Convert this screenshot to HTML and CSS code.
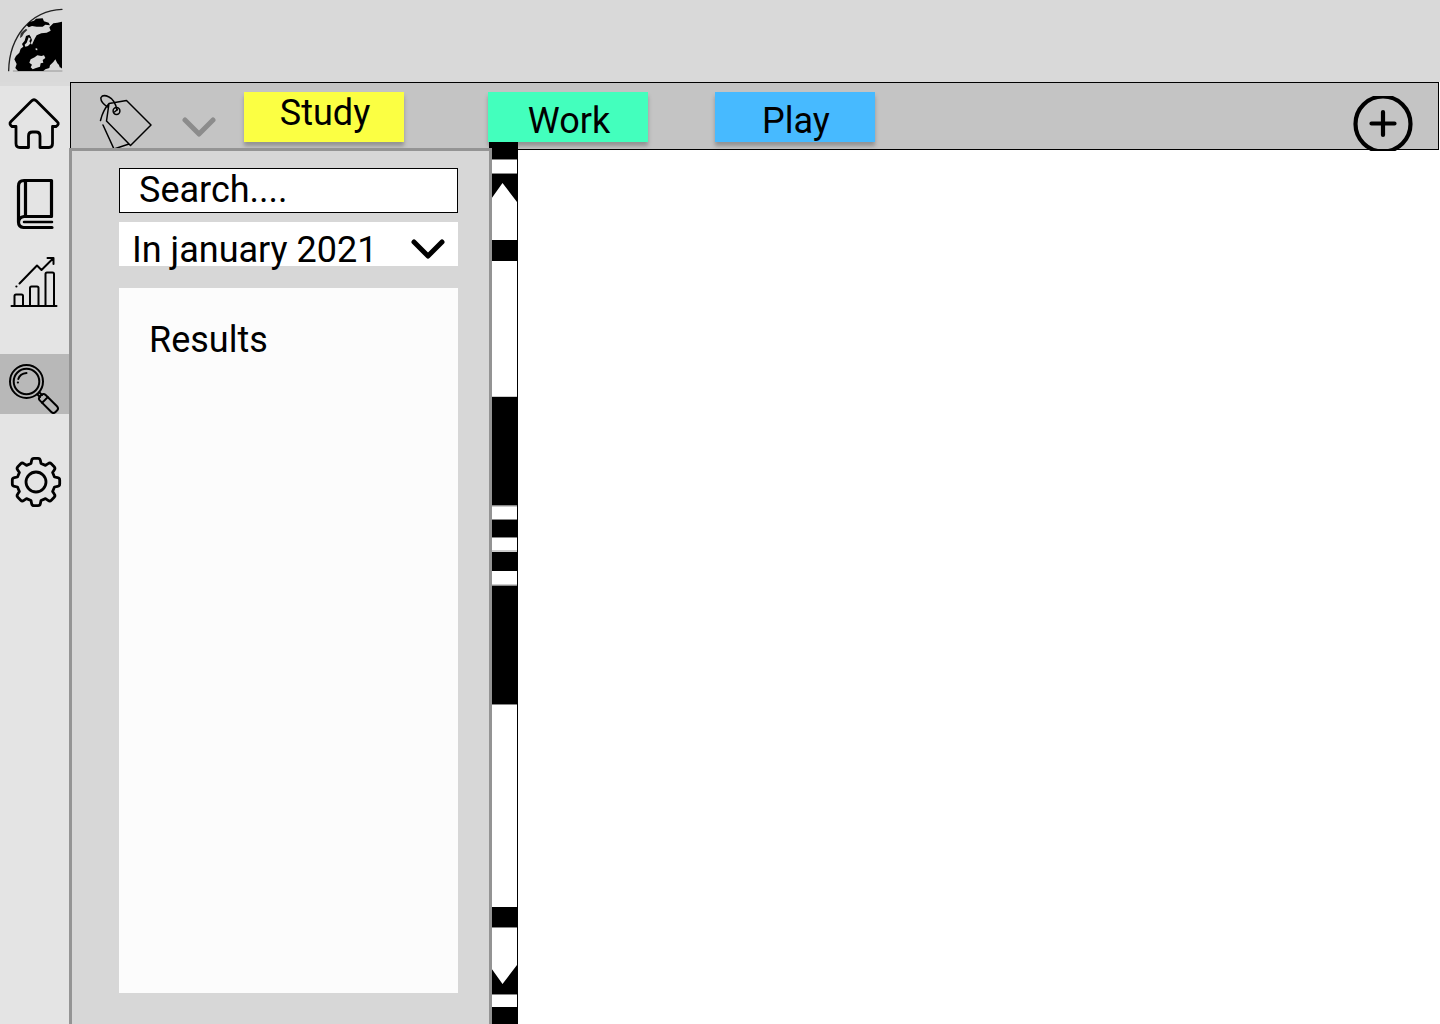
FILE: index.html
```html
<!DOCTYPE html>
<html lang="en">
<head>
<meta charset="utf-8">
<meta name="viewport" content="width=device-width, initial-scale=1">
<title>Search</title>
<link rel="stylesheet" href="styles.css">
</head>
<body>
<header class="topbar">
  <a class="logo" href="#" aria-label="Start page">
    <svg width="70" height="82" viewBox="0 0 210 246">
      <path d="M26 212C28 110 92 32 186 28" fill="none" stroke="#222" stroke-width="4"/>
      <path d="M40 213H186" stroke="#777" stroke-width="2"/>
      <path d="M80 76L88 66L102 62L108 56L128 55L132 64L146 68L150 76L136 74L128 80L110 80L96 78L86 82Z"/>
      <path d="M186 65V206L180 198L172 190L166 178L160 186L150 196L148 204L136 208L130 213H54L46 204L50 192L43 178L48 168L58 158L62 146L70 140L66 132L74 122L78 108L88 104L92 110L96 120L92 130L96 134L104 116L110 106L124 100L140 98L152 92L148 82L160 70L172 68Z"/>
      <path d="M62 100L70 92L78 86L82 90L72 100L66 110L60 114Z" fill="#333"/>
      <g fill="#d9d9d9">
        <path d="M86 112L92 116L88 124L92 130L84 138L76 140L74 134L80 128Z"/>
        <path d="M104 172L112 166L124 168L132 166L136 174L128 180L130 188L122 190L120 200L108 204L98 208L92 202L96 194L88 188L92 178Z"/>
        <path d="M107 144l5 2v5l-5-1z"/>
      </g>
      <path d="M176 190l8 4 2 10-7-2z"/>
    </svg>
  </a>
</header>
<div class="shell">
  <nav class="sidebar" aria-label="Main">
    <button class="nav-item" type="button" aria-label="Home">
      <svg viewBox="0 93 70 60"><path stroke-width="2.8" d="M31.5 100L11 120.5Q8.500 123 12 125.500H16V142.500Q16 146.500 20 146.500H28.500V135Q28.500 131 32.500 131H36Q40 131 40 135V146.500H49Q52.500 146.500 52.500 142.500V125.500H56Q60 123 57 120.500L36.500 100Q34 97.500 31.500 100Z"/></svg>
    </button>
    <button class="nav-item" type="button" aria-label="Library">
      <svg viewBox="0 174 70 60"><path stroke-width="3.2" d="M52 227.500H23.500Q18.500 227 18.500 222V186Q18.500 180.500 24 180.500H51.500V216.500H24Q19 217 18.500 222M25.500 181V216"/><path stroke-width="2.500" d="M24 222H52"/></svg>
    </button>
    <button class="nav-item" type="button" aria-label="Statistics">
      <svg viewBox="0 254 70 60"><path stroke-width="2" d="M11.500 306H56.500M14.500 306V296Q14.500 294.500 16 294.500H21.500Q23 294.500 23 296V306M30 306V288Q30 286.500 31.500 286.500H37Q38.500 286.500 38.500 288V306M45.500 306V274Q45.500 272.500 47 272.500H52.500Q54 272.500 54 274V306M19.500 283.500L37 265.500L41.500 270L53.500 258M47.500 258H53.500V264M16.300 286.500h.2"/></svg>
    </button>
    <button class="nav-item nav-item--spaced nav-item--active" type="button" aria-label="Search" aria-current="page">
      <svg viewBox="0 354 70 60"><g stroke-width="2"><circle cx="26.500" cy="381.500" r="16.500"/><circle cx="26.500" cy="381.500" r="12.800"/><path d="M18.300 379Q20 373.500 26.500 373M17.800 382.500h.2M37.500 394.500L40 397M39.500 392.500L42 395"/><g transform="rotate(45 40 395)"><rect x="41" y="391" width="22" height="8" rx="3"/><path d="M47 391V399"/></g></g></svg>
    </button>
    <button class="nav-item nav-item--spaced" type="button" aria-label="Settings">
      <svg viewBox="-36 -28 70 60"><circle r="10" stroke-width="2.800"/><path stroke-width="2.800" d="M-5-18.500L-4.400-21.500Q-4-23.700-2-23.700H2Q4-23.700 4.400-21.500L5-18.500L9.500-16.600L12.100-18.300Q13.900-19.600 15.300-18.200L18.200-15.300Q19.600-13.900 18.300-12.100L16.600-9.500L18.500-5L21.500-4.400Q23.700-4 23.700-2V2Q23.700 4 21.500 4.400L18.500 5L16.600 9.500L18.300 12.100Q19.600 13.900 18.200 15.300L15.300 18.200Q13.900 19.600 12.100 18.300L9.500 16.600L5 18.500L4.400 21.500Q4 23.700 2 23.700H-2Q-4 23.700-4.400 21.500L-5 18.500L-9.500 16.600L-12.100 18.300Q-13.900 19.600-15.300 18.200L-18.200 15.300Q-19.600 13.900-18.300 12.100L-16.600 9.500L-18.500 5L-21.500 4.400Q-23.700 4-23.700 2V-2Q-23.700-4-21.500-4.400L-18.500-5L-16.600-9.500L-18.300-12.100Q-19.600-13.900-18.200-15.300L-15.300-18.200Q-13.900-19.600-12.100-18.300L-9.500-16.600Z"/></svg>
    </button>
  </nav>
  <div class="content">
    <div class="toolbar">
      <button class="tool" type="button" aria-label="Tags">
        <svg width="54" height="57" viewBox="99 92 54 57" stroke-width="1.500"><path d="M109 103.500L126.500 100.500L151 125L130.500 145.500L106.500 121ZM109 103.500Q103 110 100.500 120.500M103 125L114 149L129 144M107.500 107Q100 102 101 97.500Q103 94 109 97Q115 100 117 110"/><circle cx="116.500" cy="111" r="3.400"/><path d="M114.500 112l3-2.500"/></svg>
      </button>
      <button class="tool tool--menu" type="button" aria-label="More tags">
        <svg width="34" height="24" viewBox="0 0 34 24"><path d="M3 4L17 18L31 4" stroke="#8c8c8c" stroke-width="5"/></svg>
      </button>
      <button class="tag tag--study" type="button">Study</button>
      <button class="tag tag--work" type="button">Work</button>
      <button class="tag tag--play" type="button">Play</button>
      <button class="tool tool--add" type="button" aria-label="Add tag">
        <svg width="60" height="55" viewBox="-30 -27 60 55"><circle cy="1" r="27.500" stroke-width="4.200"/><path d="M-11.500 .5H11.500M0-11V12" stroke-width="4.200"/></svg>
      </button>
    </div>
    <div class="workspace">
      <aside class="panel">
        <input class="search" type="text" placeholder="Search...." aria-label="Search">
        <div class="period">
          <select class="period-select" aria-label="Period"><option>In january 2021</option></select>
          <svg class="period-arrow" width="34" height="24" viewBox="0 0 34 24"><path d="M3 4L17 18L31 4" stroke-width="5"/></svg>
        </div>
        <section class="results"><h2 class="results-title">Results</h2></section>
      </aside>
      <div class="scroller" aria-hidden="true">
        <svg class="scroller-art" viewBox="489 142 29 882" preserveAspectRatio="none">
          <path fill="#000" d="M489 142H518V1024H489Z"/>
          <path fill="#fff" d="M489 159H517V173H489ZM489 202L502.500 183L517 202V240H489ZM489 261H517V397H489ZM489 506H517V519H489ZM489 538H517V551H489ZM489 571H517V585H489ZM489 705H517V907H489ZM489 928H517V965L502.500 984L489 965ZM489 994H517V1007H489Z"/>
          <path fill="#888" d="M489 159H517V160H489ZM489 173H517V174H489ZM489 505H517V506H489ZM489 519H517V520H489ZM489 537H517V538H489ZM489 585H517V586H489ZM489 704H517V705H489ZM489 927H517V928H489ZM489 994H517V995H489Z"/>
          <path fill="#ccc" d="M489 396H517V397H489ZM489 506H517V507H489ZM489 550H517V552H489ZM489 584H517V585H489Z"/>
        </svg>
      </div>
      <main class="document"></main>
    </div>
  </div>
</div>
</body>
</html>
```
FILE: styles.css
```css
* { box-sizing: border-box; }

body {
  margin: 0;
  min-height: 100vh;
  display: flex;
  flex-direction: column;
  background: #fff;
  color: #000;
  font-family: Roboto, "Liberation Sans", sans-serif;
  font-size: 36px;
  line-height: 42px;
}

button, input, select {
  margin: 0;
  padding: 0;
  border: 0;
  border-radius: 0;
  background: none;
  color: inherit;
  font: inherit;
}

svg {
  display: block;
  stroke-linecap: round;
  stroke-linejoin: round;
}

.topbar { height: 82px; background: #d9d9d9; }
.logo { display: block; width: 70px; color: inherit; }

.shell { flex: 1; display: flex; }

.sidebar {
  flex: none;
  width: 70px;
  padding-top: 8px;
  display: flex;
  flex-direction: column;
  gap: 20px;
  background: #e4e4e4;
  border-top: 4px solid #dadada;
}
.nav-item { width: 70px; height: 60px; }
.nav-item svg { width: 70px; height: 60px; fill: none; stroke: #000; }
.nav-item--spaced { margin-top: 20px; }
.nav-item--active { background: #b8b8b8; }

.content { flex: 1; min-width: 0; display: flex; flex-direction: column; }

.toolbar {
  height: 68px;
  margin-right: 1px;
  padding: 9px 25px 0 28px;
  display: flex;
  align-items: flex-start;
  background: #c4c4c4;
  border: 1px solid #000;
}
.tool { flex: none; }
.tool svg { fill: none; stroke: #000; }
.tool--menu { margin: 24px 28px 0 29px; }
.tool--add { margin: 4px 0 0 auto; }

.tag {
  flex: none;
  width: 160px;
  height: 50px;
  padding-left: 2px;
  display: flex;
  justify-content: center;
  box-shadow: 0 4px 4px rgba(0, 0, 0, 0.25);
}
.tag--study { align-items: flex-start; background: #fbff43; }
.tag--work { align-items: flex-end; margin: 0 67px 0 84px; background: #43ffbd; }
.tag--play { align-items: flex-end; background: #47baff; }

.workspace { flex: 1; display: flex; margin: -2px 0 0 -1px; }

.panel {
  position: relative;
  z-index: 1;
  flex: none;
  width: 423px;
  padding: 17px 31px 31px 47px;
  display: flex;
  flex-direction: column;
  background: #d7d7d7;
  border: 3px solid #949494;
  border-bottom: 0;
}
.search {
  width: 100%;
  height: 45px;
  padding: 0 19px 2px;
  background: #fff;
  border: 1px solid #000;
}
.search::placeholder { color: #000; opacity: 1; }

.period {
  position: relative;
  height: 44px;
  margin: 9px 0 22px;
  background: #fff;
}
.period-select {
  width: 100%;
  height: 56px;
  padding: 0 48px 0 13px;
  appearance: none;
}
.period-arrow {
  position: absolute;
  top: 16px;
  right: 13px;
  fill: none;
  stroke: #000;
  pointer-events: none;
}

.results { flex: 1; padding: 31px 30px; background: #fcfcfc; }
.results-title { margin: 0; font-size: 36px; font-weight: 400; }

.scroller { position: relative; flex: none; width: 26px; }
.scroller-art {
  position: absolute;
  top: -6px;
  right: 0;
  width: 29px;
  height: calc(100% + 6px);
}

.document { flex: 1; border-top: 2px solid transparent; }
```
